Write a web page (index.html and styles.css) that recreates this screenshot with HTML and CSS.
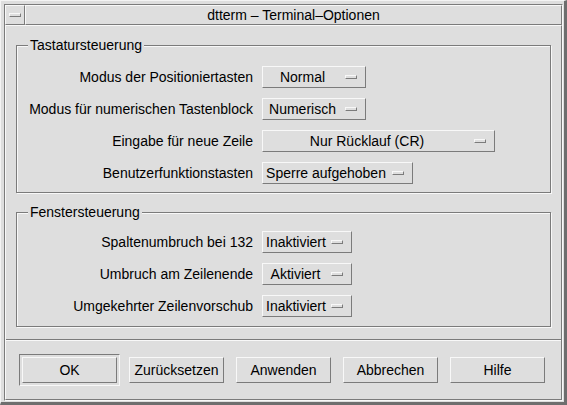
FILE: index.html
```html
<!DOCTYPE html>
<html lang="de">
<head>
<meta charset="utf-8">
<title>dtterm – Terminal–Optionen</title>
<link rel="stylesheet" href="styles.css">
</head>
<body>
<div class="window">
  <div class="frame">
    <div class="titlebar">
      <div class="menu-btn"><span class="menu-bar"></span></div>
      <div class="title">dtterm – Terminal–Optionen</div>
    </div>
    <div class="panel">
      <div class="form">
        <fieldset class="group group-keys">
          <legend>Tastatursteuerung</legend>
          <div class="grid">
            <div class="row-label">Modus der Positioniertasten</div>
            <div class="option opt-pos"><span class="option-text">Normal</span><span class="indicator"></span></div>
            <div class="row-label">Modus für numerischen Tastenblock</div>
            <div class="option opt-pos"><span class="option-text">Numerisch</span><span class="indicator"></span></div>
            <div class="row-label">Eingabe für neue Zeile</div>
            <div class="option opt-newline"><span class="option-text">Nur Rücklauf (CR)</span><span class="indicator"></span></div>
            <div class="row-label">Benutzerfunktionstasten</div>
            <div class="option opt-lock"><span class="option-text">Sperre aufgehoben</span><span class="indicator"></span></div>
          </div>
        </fieldset>
        <fieldset class="group group-window">
          <legend>Fenstersteuerung</legend>
          <div class="grid">
            <div class="row-label">Spaltenumbruch bei 132</div>
            <div class="option opt-toggle"><span class="option-text">Inaktiviert</span><span class="indicator"></span></div>
            <div class="row-label">Umbruch am Zeilenende</div>
            <div class="option opt-toggle"><span class="option-text">Aktiviert</span><span class="indicator"></span></div>
            <div class="row-label">Umgekehrter Zeilenvorschub</div>
            <div class="option opt-toggle"><span class="option-text">Inaktiviert</span><span class="indicator"></span></div>
          </div>
        </fieldset>
      </div>
      <div class="actions">
        <div class="default-ring"><button class="btn">OK</button></div>
        <button class="btn">Zurücksetzen</button>
        <button class="btn">Anwenden</button>
        <button class="btn">Abbrechen</button>
        <button class="btn">Hilfe</button>
      </div>
    </div>
  </div>
</div>
</body>
</html>
```
FILE: styles.css
```css
* { box-sizing: border-box; }
html, body { margin: 0; padding: 0; }
body {
  font-family: "Liberation Sans", Arial, sans-serif;
  font-size: 14px;
  color: #000;
  background: #dedede;
}
.window {
  width: 567px;
  height: 405px;
  display: flex;
  background: #dedede;
  border-style: solid;
  border-width: 1px 3px 3px 1px;
  border-color: #f4f4f4 #6e6e6e #6e6e6e #f4f4f4;
  padding: 3px 1px 1px 3px;
}
.frame {
  flex: 1;
  display: flex;
  flex-direction: column;
  border: 1px solid;
  border-color: #7b7b7b #f8f8f8 #f8f8f8 #7b7b7b;
}
.titlebar {
  height: 20px;
  display: flex;
}
.menu-btn {
  width: 20px;
  display: flex;
  align-items: center;
  justify-content: center;
  border: 1px solid;
  border-color: #f8f8f8 #7b7b7b #7b7b7b #f8f8f8;
}
.menu-bar {
  width: 12px;
  height: 4px;
  border: 1px solid;
  border-color: #f8f8f8 #7b7b7b #7b7b7b #f8f8f8;
}
.title {
  flex: 1;
  text-align: center;
  line-height: 18px;
  border: 1px solid;
  border-color: #f8f8f8 #7b7b7b #7b7b7b #f8f8f8;
}
.panel {
  flex: 1;
  display: flex;
  flex-direction: column;
  border: 1px solid;
  border-color: #f8f8f8 #7b7b7b #7b7b7b #f8f8f8;
}
.form {
  padding: 11px 10px 0;
}
.group {
  margin: 0;
  min-width: 0;
  border: 1px solid #7b7b7b;
  box-shadow: 1px 1px 0 #f8f8f8, inset 1px 1px 0 #f8f8f8;
  padding: 13px 0 8px 10px;
}
.group legend {
  padding: 0 2px;
  margin-left: 1px;
  line-height: 16px;
  background: #dedede;
}
.group-window {
  margin-top: 11px;
  padding-top: 11px;
  padding-bottom: 9px;
}
.grid {
  display: grid;
  grid-template-columns: 226px auto;
  column-gap: 9px;
  row-gap: 10px;
  align-items: center;
  justify-items: start;
}
.row-label {
  justify-self: end;
  white-space: nowrap;
}
.option {
  height: 22px;
  display: flex;
  align-items: center;
  padding: 0 8px 0 3px;
  border: 1px solid;
  border-color: #f8f8f8 #7b7b7b #7b7b7b #f8f8f8;
}
.option-text {
  text-align: center;
  white-space: nowrap;
}
.opt-pos .option-text { width: 73px; }
.opt-newline .option-text { width: 202px; }
.opt-lock .option-text { width: 120px; }
.opt-toggle .option-text { width: 59px; }
.indicator {
  width: 12px;
  height: 4px;
  margin-left: 6px;
  border: 1px solid;
  border-color: #f8f8f8 #7b7b7b #7b7b7b #f8f8f8;
}
.actions {
  margin-top: auto;
  display: flex;
  gap: 12px;
  padding: 17px 16px 16px;
  border-top: 1px solid #7b7b7b;
  box-shadow: inset 0 1px 0 #f8f8f8;
}
.default-ring {
  display: flex;
  margin: -3px;
  padding: 2px;
  border: 1px solid;
  border-color: #7b7b7b #f8f8f8 #f8f8f8 #7b7b7b;
}
.btn {
  width: 95px;
  height: 26px;
  margin: 0;
  padding: 0;
  font: inherit;
  color: #000;
  background: #dedede;
  border: 1px solid;
  border-color: #f8f8f8 #7b7b7b #7b7b7b #f8f8f8;
  border-radius: 0;
  text-align: center;
}
```
